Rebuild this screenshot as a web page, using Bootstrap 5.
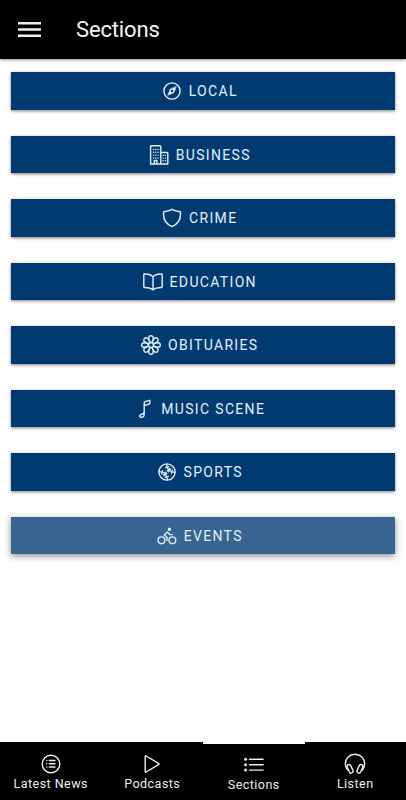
<!DOCTYPE html>
<html lang="en">
<head>
<meta charset="utf-8">
<meta name="viewport" content="width=device-width, initial-scale=1">
<title>Sections</title>
<link href="https://cdn.jsdelivr.net/npm/bootstrap@5.3.0/dist/css/bootstrap.min.css" rel="stylesheet">
<style>
body{font-family:Roboto,"Liberation Sans",sans-serif;height:800px;overflow:hidden}
.top-bar{height:59px;padding:0 18px;gap:35px;box-shadow:0 1px 3px rgba(0,0,0,.45)}
.top-bar h1{font-size:22px;font-weight:400;letter-spacing:-.15px;line-height:30px;color:#f4f4f4}
.menu-btn{width:23px;height:15px;line-height:0}
.menu-btn svg{display:block}
.section-list{padding:13.3px 11px 0 10.5px;gap:25.8px}
.section-btn{--bs-btn-color:#e3f0fb;--bs-btn-hover-color:#e3f0fb;--bs-btn-bg:#003a70;--bs-btn-hover-bg:#003a70;height:37.7px;padding:0 5.6px 0 0;gap:6.6px;border:0;background:#003a70;font-size:14px;letter-spacing:1.33px;box-shadow:0 1px 3px rgba(0,0,0,.5)}
.section-btn span{line-height:20px}
.section-btn.pressed{background:#37658f;box-shadow:0 2px 7px rgba(0,0,0,.45)}
.ico{fill:none;stroke:currentColor;stroke-width:1.4;stroke-linecap:round;stroke-linejoin:round;flex:none}
.tab-bar{height:58px}
.tab-bar a{color:#eee;font-size:12.5px;letter-spacing:.47px;padding-top:10.5px;line-height:16px;border-top:0 solid #fff}
.tab-bar a.active{border-top-width:2px;padding-top:9.5px}
.tab-bar svg{display:block;margin-bottom:1.4px}
</style>
</head>
<body class="d-flex flex-column bg-white">
<header class="top-bar d-flex align-items-center bg-black flex-shrink-0">
<button class="menu-btn btn p-0 border-0" aria-label="Menu"><svg width="23" height="15" fill="#eee"><path d="M0 0h23v2.6H0zM0 6.2h23v2.6H0zM0 12.4h23V15H0z"/></svg></button>
<h1 class="mb-0">Sections</h1>
</header>
<main class="section-list d-flex flex-column flex-grow-1">
<button class="section-btn btn rounded-0 d-flex align-items-center justify-content-center"><svg class="ico" width="20" height="20"><circle cx="10" cy="10" r="8.1"/><path d="M14.2 5.8 11.8 11.7 5.8 14.2 8.3 8.2z" fill="currentColor" stroke-width=".6"/><circle cx="10" cy="10" r="1.2" fill="#003a70" stroke="none"/></svg><span>LOCAL</span></button>
<button class="section-btn btn rounded-0 d-flex align-items-center justify-content-center"><svg class="ico" width="20" height="20"><path d="M1.6 19V1.4Q1.6.8 2.2.8H11q.8 0 .8.8V19M12 7.5h6q.8 0 .8.8V19H1.6M5.3 18.5v-3h2.6v3"/><path d="M4.5 4.5h.1M6.7 4.5h.1M9 4.5h.1M4.5 7.3h.1M6.7 7.3h.1M9 7.3h.1M4.5 10.1h.1M6.7 10.1h.1M9 10.1h.1M4.5 12.9h.1M6.7 12.9h.1M9 12.9h.1M14.1 10.4h.1M16.4 10.4h.1M14.1 13.1h.1M16.4 13.1h.1M14.1 15.8h.1M16.4 15.8h.1"/></svg><span>BUSINESS</span></button>
<button class="section-btn btn rounded-0 d-flex align-items-center justify-content-center"><svg class="ico" width="20" height="20"><path d="M10 1.3Q13 3.1 18.3 3.7C19.3 10.9 16 16 10 18.6 4 16 .7 10.9 1.7 3.7Q7 3.1 10 1.3z"/></svg><span>CRIME</span></button>
<button class="section-btn btn rounded-0 d-flex align-items-center justify-content-center"><svg class="ico" width="20" height="20"><path d="M10 5Q8.2 2 1.5 2q-.7 0-.7.7v12.1q0 .7.7.7 6.1 0 8.5 2.4 2.4-2.4 8.5-2.4.7 0 .7-.7V2.7q0-.7-.7-.7Q11.8 2 10 5zM10 5v12.6"/></svg><span>EDUCATION</span></button>
<button class="section-btn btn rounded-0 d-flex align-items-center justify-content-center"><svg class="ico" width="20" height="20" viewBox="-10 -10 20 20"><defs><path id="petal" d="M-.9-2.5C-3-6-2.7-9.3 0-9.3S3-6 .9-2.5"/></defs><circle r="2.5"/><use href="#petal"/><use href="#petal" transform="rotate(45)"/><use href="#petal" transform="rotate(90)"/><use href="#petal" transform="rotate(135)"/><use href="#petal" transform="rotate(180)"/><use href="#petal" transform="rotate(225)"/><use href="#petal" transform="rotate(270)"/><use href="#petal" transform="rotate(315)"/></svg><span>OBITUARIES</span></button>
<button class="section-btn btn rounded-0 d-flex align-items-center justify-content-center"><svg class="ico" width="20" height="20"><path d="M9.2 15.4c0 3-4.5 4.2-4.6 1.5 0-2.2 4.6-1 4.6-4V4q0-1 1-1.3l4-1.3q.7-.2.7.5v2q0 .8-.8 1.1L9.2 6.6z"/></svg><span>MUSIC SCENE</span></button>
<button class="section-btn btn rounded-0 d-flex align-items-center justify-content-center"><svg class="ico" width="20" height="20"><circle cx="10" cy="10" r="8.1"/><path d="M9.6 2.2C9.8 7 13 10.2 17.8 10.4M2.2 9.6C7 9.8 10.2 13 10.4 17.8"/><path d="m8.5 5.6 3.4-1M10.2 8.7l2.6-2.3M11.3 9.8l2.3-2.6M14.4 11.5l1-3.4M5.6 8.5l-1 3.4M8.7 10.2l-2.3 2.6M9.8 11.3l-2.6 2.3M11.5 14.4l-3.4 1" stroke-width="1.3"/></svg><span>SPORTS</span></button>
<button class="section-btn pressed btn rounded-0 d-flex align-items-center justify-content-center"><svg class="ico" width="20" height="20"><circle cx="4.5" cy="14.3" r="3.4"/><circle cx="15.4" cy="14.3" r="3.4"/><circle cx="12.4" cy="3.2" r="1" fill="currentColor"/><path d="M10 14.4v-3.1L7.2 9l3.1-3.1 2.5 2.7h2.5"/></svg><span>EVENTS</span></button>
</main>
<nav class="tab-bar d-flex bg-black flex-shrink-0">
<a href="#" class="col-3 d-flex flex-column align-items-center text-decoration-none"><svg class="ico" width="22" height="22"><circle cx="11" cy="11" r="8.8"/><path d="M9.3 7.5H15M9.3 10.8H15M9.3 14H15M6.7 7.5h.1M6.7 10.8h.1M6.7 14h.1"/></svg>Latest News</a>
<a href="#" class="col-3 d-flex flex-column align-items-center text-decoration-none"><svg class="ico" width="22" height="22"><path d="M4.2 3.4v15.2q0 .9.9.4l12.5-7.4q.8-.6 0-1.2L5.1 3Q4.2 2.5 4.2 3.4z"/></svg>Podcasts</a>
<a href="#" class="active col-3 d-flex flex-column align-items-center text-decoration-none"><svg class="ico" width="22" height="22"><path d="M6.5 5.3h13.6M6.5 10.7h13.6M6.5 16.1h13.6"/><g fill="currentColor" stroke="none"><circle cx="2.6" cy="5.3" r="1.5"/><circle cx="2.6" cy="10.7" r="1.5"/><circle cx="2.6" cy="16.1" r="1.5"/></g></svg>Sections</a>
<a href="#" class="col-3 d-flex flex-column align-items-center text-decoration-none"><svg class="ico" width="22" height="22"><path d="M3.5 17Q1.3 14.5 1.3 10.8a9.7 9.5 0 0 1 19.4 0q0 3.7-2.2 6.2"/><rect x="4.2" y="11.3" width="3.8" height="9" rx="1.9" transform="rotate(-24 6.1 15.8)"/><rect x="14" y="11.3" width="3.8" height="9" rx="1.9" transform="rotate(24 15.9 15.8)"/></svg>Listen</a>
</nav>
<script src="https://cdn.jsdelivr.net/npm/bootstrap@5.3.0/dist/js/bootstrap.bundle.min.js"></script>
</body>
</html>
